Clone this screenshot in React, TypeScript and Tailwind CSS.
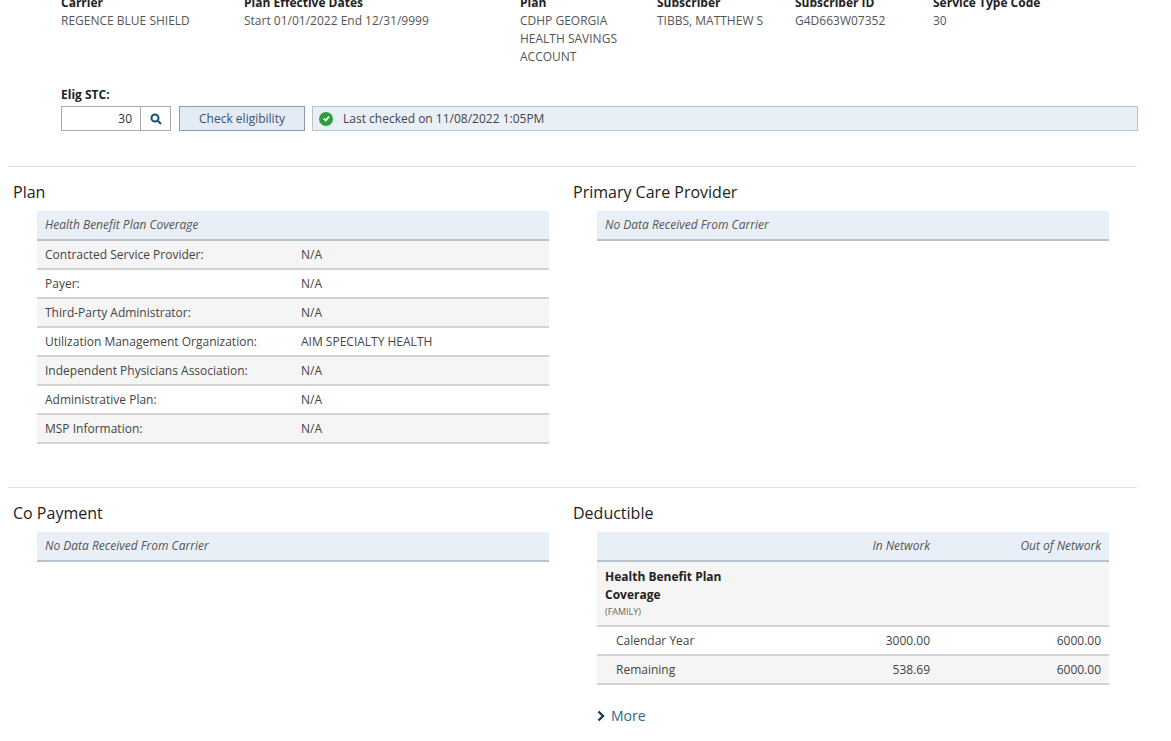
const font = { fontFamily: '"Open Sans", "Noto Sans", sans-serif' }

const planRows = [
  ['Contracted Service Provider:', 'N/A'],
  ['Payer:', 'N/A'],
  ['Third-Party Administrator:', 'N/A'],
  ['Utilization Management Organization:', 'AIM SPECIALTY HEALTH'],
  ['Independent Physicians Association:', 'N/A'],
  ['Administrative Plan:', 'N/A'],
  ['MSP Information:', 'N/A'],
]

function HeaderCol({ label, lines, w }: { label: string; lines: string[]; w: string }) {
  return (
    <div className={w}>
      <div className="text-[12px] font-bold text-[#222] leading-[18px]">{label}</div>
      {lines.map((l) => (
        <div key={l} className="text-[12px] text-[#555] leading-[18px]">{l}</div>
      ))}
    </div>
  )
}

function NoData() {
  return (
    <div className="h-[30px] bg-[#e9eff7] border-b-2 border-[#b9c3cf] flex items-center px-2 text-[12px] italic text-[#555]">
      No Data Received From Carrier
    </div>
  )
}

export default function App() {
  return (
    <div style={font} className="w-[1171px] h-[741px] overflow-hidden bg-white text-[#333]">
      <div className="flex pl-[61px] -mt-[6px]">
        <HeaderCol w="w-[183px]" label="Carrier" lines={['REGENCE BLUE SHIELD']} />
        <HeaderCol w="w-[276px]" label="Plan Effective Dates" lines={['Start 01/01/2022  End 12/31/9999']} />
        <HeaderCol w="w-[137px]" label="Plan" lines={['CDHP GEORGIA', 'HEALTH SAVINGS', 'ACCOUNT']} />
        <HeaderCol w="w-[138px]" label="Subscriber" lines={['TIBBS, MATTHEW S']} />
        <HeaderCol w="w-[138px]" label="Subscriber ID" lines={['G4D663W07352']} />
        <HeaderCol w="w-[150px]" label="Service Type Code" lines={['30']} />
      </div>

      <div className="pl-[61px] mt-[20px]">
        <div className="text-[12px] font-bold text-[#222] leading-[18px]">Elig STC:</div>
        <div className="flex items-center mt-[2px] h-[25px]">
          <div className="w-[80px] h-[25px] border border-[#aaa] flex items-center justify-end pr-2 text-[12px]">30</div>
          <div className="w-[30px] h-[25px] border border-l-0 border-[#aaa] flex items-center justify-center">
            <svg width="12" height="12" viewBox="0 0 12 12" fill="none" stroke="#1b4f72" strokeWidth="2">
              <circle cx="5" cy="5" r="3.5" />
              <path d="M7.5 7.5 L11 11" />
            </svg>
          </div>
          <button className="ml-[8px] w-[126px] h-[25px] border border-[#8a9aab] bg-[#e3ebf5] text-[12px] text-[#3b5573]">
            Check eligibility
          </button>
          <div className="ml-[7px] w-[826px] h-[25px] border border-[#b9c3cf] bg-[#e9eff7] flex items-center px-[6px] gap-[10px] text-[12px] text-[#444]">
            <span className="w-[14px] h-[14px] rounded-full bg-[#2e9e3a] flex items-center justify-center">
              <svg width="9" height="9" viewBox="0 0 10 10" fill="none" stroke="white" strokeWidth="2"><path d="M2 5 L4.2 7.2 L8 2.8" /></svg>
            </span>
            Last checked on 11/08/2022 1:05PM
          </div>
        </div>
      </div>

      <div className="ml-[8px] w-[1129px] border-t border-[#e3e3e3] mt-[35px]" />

      <div className="flex mt-[14px] h-[306px]">
        <div className="w-[560px] pl-[13px]">
          <div className="text-[16px] text-[#222] leading-[22px]">Plan</div>
          <div className="ml-[24px] w-[512px] mt-[8px]">
            <div className="h-[30px] bg-[#e9eff7] border-b-2 border-[#b9c3cf] flex items-center px-2 text-[12px] italic text-[#555]">
              Health Benefit Plan Coverage
            </div>
            {planRows.map(([k, v], i) => (
              <div key={k} className={`h-[29px] flex items-center px-2 text-[12px] text-[#444] border-b-2 border-[#d3d3d3] ${i % 2 ? 'bg-white' : 'bg-[#f5f5f5]'}`}>
                <span className="w-[256px]">{k}</span>
                <span>{v}</span>
              </div>
            ))}
          </div>
        </div>
        <div className="pl-[13px]">
          <div className="text-[16px] text-[#222] leading-[22px]">Primary Care Provider</div>
          <div className="ml-[24px] w-[512px] mt-[8px]"><NoData /></div>
        </div>
      </div>

      <div className="ml-[8px] w-[1129px] border-t border-[#e3e3e3]" />

      <div className="flex mt-[14px]">
        <div className="w-[560px] pl-[13px]">
          <div className="text-[16px] text-[#222] leading-[22px]">Co Payment</div>
          <div className="ml-[24px] w-[512px] mt-[8px]"><NoData /></div>
        </div>
        <div className="pl-[13px]">
          <div className="text-[16px] text-[#222] leading-[22px]">Deductible</div>
          <div className="ml-[24px] w-[512px] mt-[8px] text-[12px]">
            <div className="h-[30px] bg-[#e9eff7] border-b-2 border-[#b9c3cf] flex items-center italic text-[#555]">
              <span className="flex-1" />
              <span className="w-[120px] text-right">In Network</span>
              <span className="w-[179px] text-right pr-2">Out of Network</span>
            </div>
            <div className="h-[65px] bg-[#f5f5f5] border-b-2 border-[#d3d3d3] px-2 pt-[6px]">
              <div className="font-bold text-[#222] leading-[18px]">Health Benefit Plan<br />Coverage</div>
              <div className="text-[9px] text-[#666] leading-[15px]">(FAMILY)</div>
            </div>
            {[['Calendar Year', '3000.00', '6000.00', 'bg-white'], ['Remaining', '538.69', '6000.00', 'bg-[#f5f5f5]']].map(([a, b, c, bg]) => (
              <div key={a} className={`h-[29px] flex items-center text-[#444] border-b-2 border-[#d3d3d3] ${bg}`}>
                <span className="flex-1 pl-[19px]">{a}</span>
                <span className="w-[120px] text-right">{b}</span>
                <span className="w-[179px] text-right pr-2">{c}</span>
              </div>
            ))}
            <div className="mt-[20px] flex items-center gap-[6px] text-[14px] text-[#2c6a80]">
              <svg width="8" height="12" viewBox="0 0 8 12" fill="none" stroke="#1a3d57" strokeWidth="2.4"><path d="M1.5 1.5 L6 6 L1.5 10.5" /></svg>
              More
            </div>
          </div>
        </div>
      </div>
    </div>
  )
}
